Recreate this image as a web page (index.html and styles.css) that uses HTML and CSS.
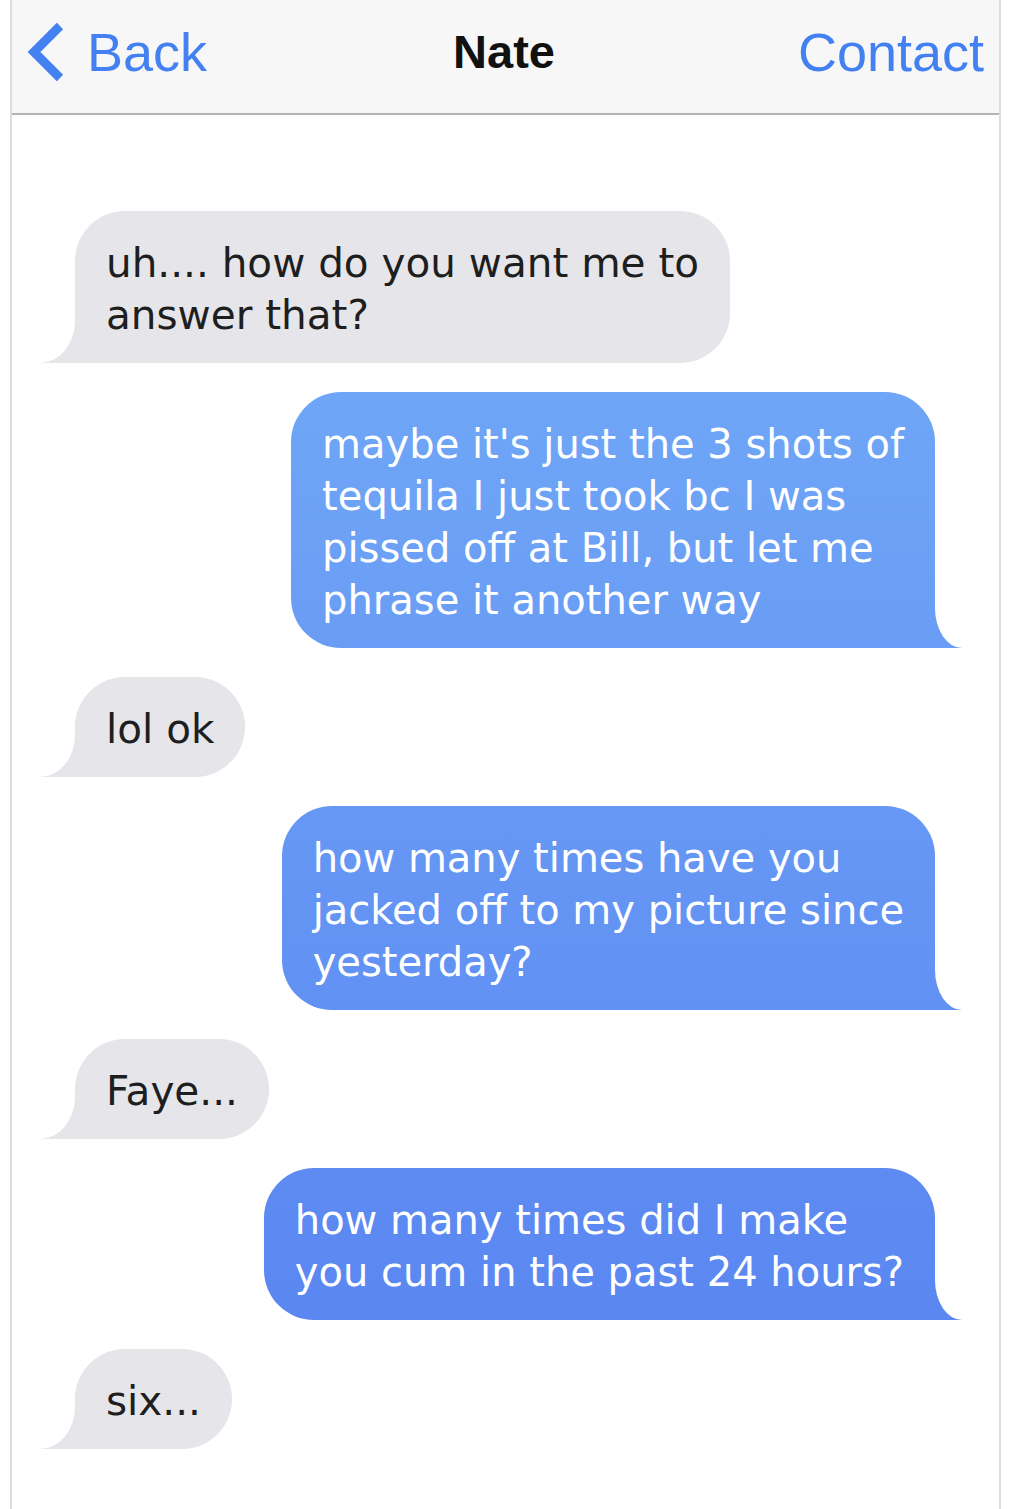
FILE: index.html
```html
<!DOCTYPE html>
<html lang="en">
<head>
    <meta charset="UTF-8">
    <meta name="viewport" content="width=device-width, initial-scale=1.0">
    <title>Nate</title>
    <link rel="stylesheet" href="styles.css">
</head>
<body>
    <div class="phone">
        <header class="topbar">
            <a class="nav-back" href="#">
                <svg class="chevron" width="44" height="70" viewBox="0 0 44 70">
                    <polyline points="36,9 10,35 36,61" fill="none" stroke="currentColor" stroke-width="9"/>
                </svg>
                <span>Back</span>
            </a>
            <div class="title">Nate</div>
            <a class="nav-contact" href="#">Contact</a>
        </header>

        <div class="thread">
            <div class="msg in">uh.... how do you want me to<br>answer that?</div>
            <div class="msg out">maybe it's just the 3 shots of<br>tequila I just took bc I was<br>pissed off at Bill, but let me<br>phrase it another way</div>
            <div class="msg in">lol ok</div>
            <div class="msg out">how many times have you<br>jacked off to my picture since<br>yesterday?</div>
            <div class="msg in">Faye...</div>
            <div class="msg out">how many times did I make<br>you cum in the past 24 hours?</div>
            <div class="msg in">six...</div>
        </div>
    </div>
</body>
</html>
```

FILE: styles.css
```css
body {
    margin: 0;
    background-color: #fff;
    font-family: "DejaVu Sans", Verdana, sans-serif;
}
.phone {
    margin-left: 10px;
    width: 987px;
    min-height: 1509px;
    border-left: 2px solid #dcdcdc;
    border-right: 2px solid #dcdcdc;
    background-color: #fff;
}

/* top bar */
.topbar {
    display: grid;
    grid-template-columns: 1fr auto 1fr;
    align-items: center;
    height: 103px;
    padding: 0 15px 10px 12px;
    background-color: #f7f7f7;
    border-bottom: 2px solid #b4b4b4;
    font-family: "Liberation Sans", Arial, sans-serif;
}
.topbar a {
    color: #4380f2;
    text-decoration: none;
    font-size: 54px;
    line-height: 1;
}
.nav-back {
    display: flex;
    align-items: center;
    gap: 19px;
    justify-self: start;
}
.chevron {
    display: block;
}
.title {
    font-size: 47px;
    font-weight: bold;
    line-height: 1;
    color: #111;
}
.nav-contact {
    justify-self: end;
}

/* messages */
.thread {
    display: flex;
    flex-direction: column;
    gap: 29px;
    padding: 96px 0 40px;
}
.msg {
    position: relative;
    z-index: 0;
    padding: 26px 31px 22px;
    border-radius: 50px;
    font-size: 40.5px;
    line-height: 52px;
    white-space: nowrap;
}
.msg::before,
.msg::after {
    content: "";
    position: absolute;
    z-index: -1;
    bottom: 0;
    height: 48px;
}
.msg.in {
    align-self: flex-start;
    margin-left: 63px;
    background-color: #e5e5ea;
    color: #1e1e1e;
}
.msg.in::before {
    left: -35px;
    width: 90px;
    background: inherit;
}
.msg.in::after {
    left: -55px;
    width: 55px;
    background-color: #fff;
    border-bottom-right-radius: 35px 42px;
}
.msg.out {
    align-self: flex-end;
    margin-right: 64px;
    font-size: 40px;
    color: #fff;
    background: linear-gradient(#78b3f9, #5680f0) fixed;
}
.msg.out::before {
    right: -27px;
    width: 90px;
    background: inherit;
}
.msg.out::after {
    right: -55px;
    width: 55px;
    background-color: #fff;
    border-bottom-left-radius: 27px 40px;
}
```
